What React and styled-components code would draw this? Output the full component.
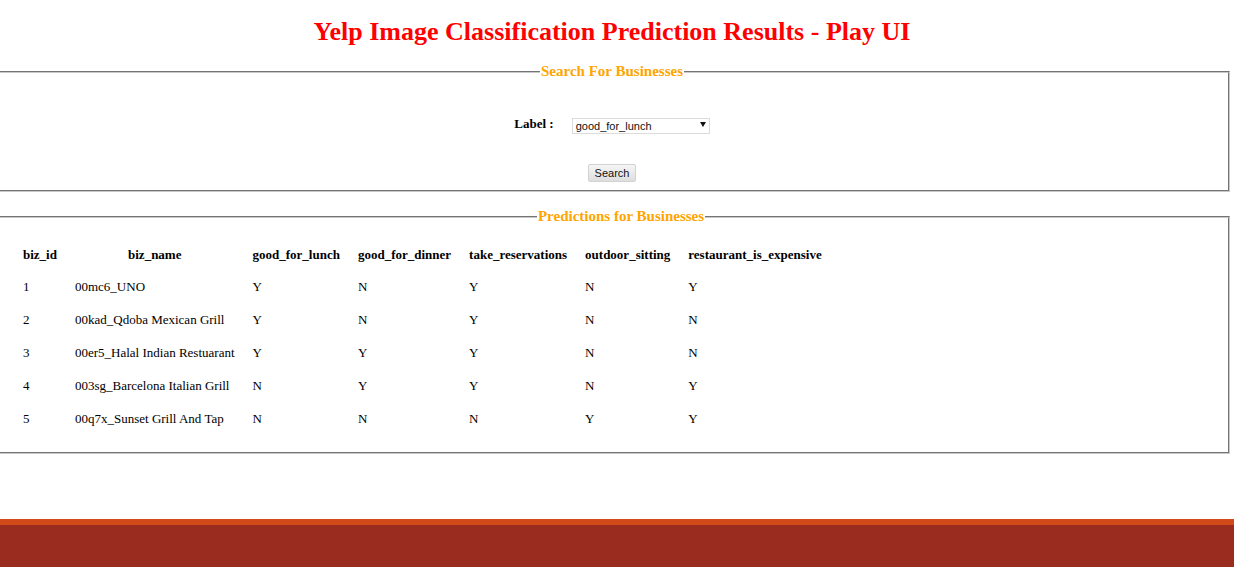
import React from "react";
import styled, { createGlobalStyle } from "styled-components";

const Global = createGlobalStyle`
  html, body { margin: 0; padding: 0; background: #fff; overflow: hidden; }
  body { font-family: "Liberation Serif", "Times New Roman", serif; color: #000; }
`;

const Page = styled.div`
  display: flex;
  flex-direction: column;
  width: 1236px;
  margin-left: -6px;
  height: 567px;
`;

const Title = styled.h1`
  margin: 17px 0 0;
  height: 30px;
  line-height: 30px;
  text-align: center;
  color: #ff0000;
  font-size: 26px;
  font-weight: bold;
`;

const Fieldset = styled.fieldset`
  margin: ${(p) => p.$top}px 0 0;
  padding: 0 0 ${(p) => p.$bottom}px ${(p) => p.$left || 0}px;
  border: 2px groove #c8c8c8;
  min-width: 0;
`;

const Legend = styled.legend`
  margin: 0 auto;
  padding: 0 1px;
  color: #ffa500;
  font-size: 15px;
  font-weight: bold;
  line-height: 17px;
`;

const FormRow = styled.div`
  display: flex;
  justify-content: center;
  align-items: center;
  height: 20px;
  margin-top: ${(p) => p.$top}px;
  gap: ${(p) => p.$gap || 0}px;
`;

const Label = styled.label`
  font-size: 13px;
  font-weight: bold;
`;

const SelectWrap = styled.div`
  position: relative;
  width: 138px;
  height: 16px;
  &::after {
    content: "";
    position: absolute;
    right: 4px;
    top: 6px;
    border-left: 3px solid transparent;
    border-right: 3px solid transparent;
    border-top: 5px solid #111;
    pointer-events: none;
  }
`;

const Select = styled.select`
  appearance: none;
  -webkit-appearance: none;
  box-sizing: border-box;
  width: 100%;
  height: 100%;
  margin: 0;
  padding: 0 0 0 3px;
  border: 1px solid #dcdcdc;
  border-radius: 0;
  background: #fff;
  font-family: "Liberation Sans", Arial, sans-serif;
  font-size: 11px;
  color: #111;
  outline: none;
`;

const Button = styled.button`
  box-sizing: border-box;
  width: 48px;
  height: 18px;
  margin: 0;
  padding: 0;
  border: 1px solid #d2d2d2;
  border-radius: 2px;
  background: linear-gradient(#f6f6f6, #dedede);
  font-family: "Liberation Sans", Arial, sans-serif;
  font-size: 11px;
  color: #111;
`;

const Table = styled.table`
  margin-top: 13px;
  border-collapse: separate;
  border-spacing: 0;
  font-size: 13px;
`;

const Th = styled.th`
  height: 32px;
  padding: 0 9px;
  text-align: center;
  font-weight: bold;
  white-space: nowrap;
  vertical-align: middle;
  line-height: 15px;
`;

const Td = styled.td`
  height: 33px;
  padding: 0 9px;
  text-align: left;
  white-space: nowrap;
  vertical-align: middle;
  line-height: 15px;
`;

const Footer = styled.footer`
  margin-top: auto;
  margin-right: -4px;
  height: 48px;
  background: #9a2c1f;
  border-top: 6px solid #d24a1a;
  box-sizing: border-box;
`;

const columns = [
  "biz_id",
  "biz_name",
  "good_for_lunch",
  "good_for_dinner",
  "take_reservations",
  "outdoor_sitting",
  "restaurant_is_expensive",
];

const rows = [
  ["1", "00mc6_UNO", "Y", "N", "Y", "N", "Y"],
  ["2", "00kad_Qdoba Mexican Grill", "Y", "N", "Y", "N", "N"],
  ["3", "00er5_Halal Indian Restuarant", "Y", "Y", "Y", "N", "N"],
  ["4", "003sg_Barcelona Italian Grill", "N", "Y", "Y", "N", "Y"],
  ["5", "00q7x_Sunset Grill And Tap", "N", "N", "N", "Y", "Y"],
];

export default function App() {
  return (
    <>
      <Global />
      <Page>
        <Title>Yelp Image Classification Prediction Results - Play UI</Title>
        <Fieldset $top={16} $bottom={7}>
          <Legend>Search For Businesses</Legend>
          <FormRow $top={34} $gap={18}>
            <Label>Label :</Label>
            <SelectWrap>
              <Select defaultValue="good_for_lunch">
                <option>good_for_lunch</option>
                <option>good_for_dinner</option>
                <option>take_reservations</option>
                <option>outdoor_sitting</option>
                <option>restaurant_is_expensive</option>
              </Select>
            </SelectWrap>
          </FormRow>
          <FormRow $top={29}>
            <Button type="button">Search</Button>
          </FormRow>
        </Fieldset>
        <Fieldset $top={16} $bottom={17} $left={18}>
          <Legend>Predictions for Businesses</Legend>
          <Table>
            <thead>
              <tr>
                {columns.map((c) => (
                  <Th key={c}>{c}</Th>
                ))}
              </tr>
            </thead>
            <tbody>
              {rows.map((r) => (
                <tr key={r[0]}>
                  {r.map((v, i) => (
                    <Td key={i}>{v}</Td>
                  ))}
                </tr>
              ))}
            </tbody>
          </Table>
        </Fieldset>
        <Footer />
      </Page>
    </>
  );
}
